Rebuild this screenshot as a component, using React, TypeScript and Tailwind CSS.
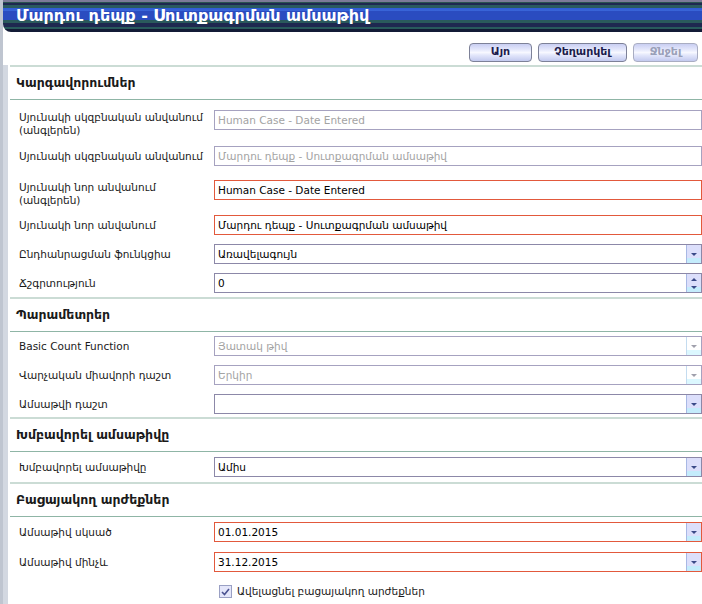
import React from "react";

function Arrow({ dir = "down", disabled = false }: { dir?: "up" | "down"; disabled?: boolean }) {
  const fill = disabled ? "#a0a0ac" : "#3a4a88";
  return (
    <svg width="6" height="3" viewBox="0 0 6 3">
      {dir === "down" ? <polygon points="0,0 6,0 3,3" fill={fill} /> : <polygon points="0,3 6,3 3,0" fill={fill} />}
    </svg>
  );
}

function Field({
  value,
  tone = "normal",
  kind = "text",
}: {
  value?: string;
  tone?: "normal" | "red" | "disabled";
  kind?: "text" | "combo" | "spin";
}) {
  const border =
    tone === "red" ? "border-[#e2593c]" : tone === "disabled" ? "border-[#a6a2c0]" : "border-[#8c88a8]";
  const color = tone === "disabled" ? "text-[#a3a3a3]" : "text-black";
  return (
    <div className={`flex h-[20px] w-[488px] border bg-white ${border}`}>
      <div className={`flex-1 truncate pl-[3px] text-[10.5px] leading-[18px] ${color}`}>{value}</div>
      {kind === "combo" && (
        <div
          className={`flex w-[15px] items-center justify-center border-l ${
            tone === "disabled"
              ? "border-[#c4dcf0] bg-[linear-gradient(to_bottom,#ffffff_70%,#dcf8ff_70%)]"
              : "border-[#a8b8e4] bg-[linear-gradient(to_bottom,#dcdffb_70%,#c4ecfc_70%)]"
          }`}
        >
          <Arrow disabled={tone === "disabled"} />
        </div>
      )}
      {kind === "spin" && (
        <div className="flex w-[15px] flex-col items-center justify-center gap-[5px] border-l border-[#a8b8e4] bg-[linear-gradient(to_bottom,#dcdffb_70%,#c4ecfc_70%)]">
          <Arrow dir="up" />
          <Arrow />
        </div>
      )}
    </div>
  );
}

function Row({
  label,
  h,
  children,
}: {
  label: React.ReactNode;
  h: string;
  children: React.ReactNode;
}) {
  return (
    <div className={`flex items-start ${h}`}>
      <div className="flex min-h-[20px] w-[206px] items-center whitespace-nowrap pl-[11px] pt-[1px] text-[10.5px] leading-[13px] text-[#1a1a1a]">
        {label}
      </div>
      {children}
    </div>
  );
}

function Header({ title }: { title: string }) {
  return (
    <>
      <div className="ml-[2px] h-[2px] bg-[#cbdcd5]" />
      <div className="flex h-[32px] items-center pl-[8px] text-[12.5px] font-bold text-[#1a1a1a]">{title}</div>
      <div className="ml-[2px] h-[1px] bg-[#8fb5a6]" />
    </>
  );
}

function Btn({ label, w, disabled = false }: { label: string; w: string; disabled?: boolean }) {
  return (
    <div
      className={`flex h-[19px] ${w} items-center justify-center rounded-[4px] border bg-[linear-gradient(to_bottom,#c9cef2_0%,#e6e9fc_35%,#f7f8ff_50%,#e3e7fb_65%,#c3caef_100%)] text-[11px] font-bold ${
        disabled ? "border-[#a9adc2] text-[#9aa0b8]" : "border-[#7d8198] text-[#1c1c4c]"
      }`}
    >
      {label}
    </div>
  );
}

export default function App() {
  return (
    <div className="flex h-[604px] w-[702px] overflow-hidden bg-[#bfc5d0] font-['DejaVu_Sans',sans-serif]">
      <div className="w-[3px]" />
      <div className="flex flex-1 flex-col bg-white">
        <div className="flex h-[32px] items-center rounded-bl-[8px] bg-[linear-gradient(to_bottom,#7c7a98_0px,#7c7a98_2px,#2a5450_2px,#2a5450_3px,#1e2850_3px,#1e2850_5px,#2a5a5e_5px,#2a5a5e_8px,#2f5ad4_8px,#3a66d8_11px,#2a4cc0_11px,#2a4cc0_20px,#2a5a5c_20px,#2a5a5c_23px,#1e2850_23px,#1e2850_27px,#285a5c_27px,#285a5c_29px,#131b36_29px)] pl-[13px] text-[16px] font-bold text-white">
          Մարդու դեպք - Սուտքագրման ամսաթիվ
        </div>
        <div className="flex justify-end gap-[6px] pr-[4px] pt-[11px]">
          <Btn label="Այո" w="w-[63px]" />
          <Btn label="Չեղարկել" w="w-[89px]" />
          <Btn label="Ջնջել" w="w-[65px]" disabled />
        </div>
        <div className="mt-[3px] flex flex-1 border-l-[5px] border-[#d3d8e1]">
          <div className="flex flex-1 flex-col">
            <Header title="Կարգավորումներ" />
            <div className="pt-[10px]">
              <Row
                h="h-[36px]"
                label={
                  <span>
                    Սյունակի սկզբնական անվանում
                    <br />
                    (անգլերեն)
                  </span>
                }
              >
                <Field value="Human Case - Date Entered" tone="disabled" />
              </Row>
              <Row h="h-[34px]" label="Սյունակի սկզբնական անվանում">
                <Field value="Մարդու դեպք - Սուտքագրման ամսաթիվ" tone="disabled" />
              </Row>
              <Row
                h="h-[35px]"
                label={
                  <span>
                    Սյունակի նոր անվանում
                    <br />
                    (անգլերեն)
                  </span>
                }
              >
                <Field value="Human Case - Date Entered" tone="red" />
              </Row>
              <Row h="h-[29px]" label="Սյունակի նոր անվանում">
                <Field value="Մարդու դեպք - Սուտքագրման ամսաթիվ" tone="red" />
              </Row>
              <Row h="h-[29px]" label="Ընդհանրացման ֆունկցիա">
                <Field value="Առավելագույն" kind="combo" />
              </Row>
              <Row h="h-[24px]" label="Ճշգրտություն">
                <Field value="0" kind="spin" />
              </Row>
            </div>
            <Header title="Պարամետրեր" />
            <div className="pt-[4px]">
              <Row h="h-[29px]" label="Basic Count Function">
                <Field value="Յատակ թիվ" tone="disabled" kind="combo" />
              </Row>
              <Row h="h-[29px]" label="Վարչական միավորի դաշտ">
                <Field value="Երկիր" tone="disabled" kind="combo" />
              </Row>
              <Row h="h-[23px]" label="Ամսաթվի դաշտ">
                <Field value="" kind="combo" />
              </Row>
            </div>
            <Header title="Խմբավորել ամսաթիվը" />
            <div className="pt-[5px]">
              <Row h="h-[25px]" label="Խմբավորել ամսաթիվը">
                <Field value="Ամիս" kind="combo" />
              </Row>
            </div>
            <Header title="Բացայակող արժեքներ" />
            <div className="pt-[5px]">
              <Row h="h-[30px]" label="Ամսաթիվ սկսած">
                <Field value="01.01.2015" tone="red" kind="combo" />
              </Row>
              <Row h="h-[30px]" label="Ամսաթիվ մինչև">
                <Field value="31.12.2015" tone="red" kind="combo" />
              </Row>
              <div className="flex items-center gap-[5px] pl-[211px] pt-[2px] text-[10.5px] text-[#1a1a1a]">
                <div className="flex h-[13px] w-[13px] items-center justify-center border border-[#9aa0c4] bg-[#e4e6fa]">
                  <svg width="9" height="8" viewBox="0 0 9 8">
                    <path d="M1 4 L3.5 6.5 L8 1" stroke="#4a5290" strokeWidth="1.6" fill="none" />
                  </svg>
                </div>
                <span>Ավելացնել բացայակող արժեքներ</span>
              </div>
            </div>
          </div>
        </div>
      </div>
    </div>
  );
}
